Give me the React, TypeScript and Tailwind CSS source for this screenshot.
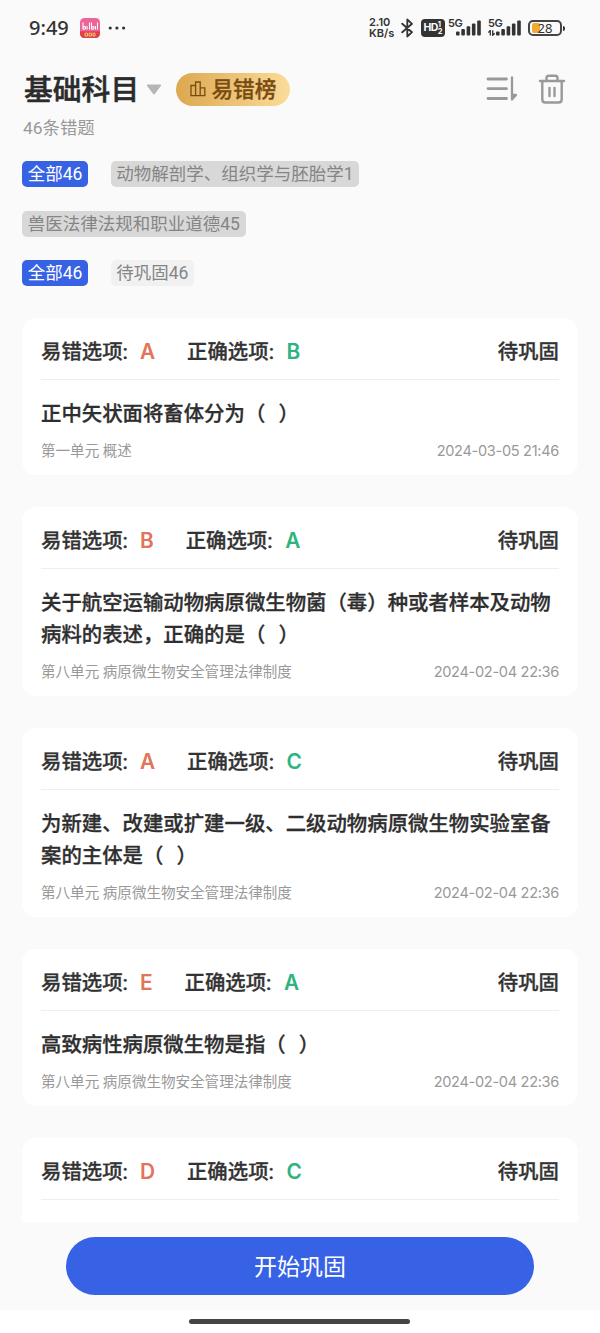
type Question = {
  wrong: string;
  right: string;
  title: string;
  unit: string;
  time: string;
};

const BLANK = "（\u00a0\u00a0）";

const questions: Question[] = [
  { wrong: "A", right: "B", title: "正中矢状面将畜体分为" + BLANK, unit: "第一单元 概述", time: "2024-03-05 21:46" },
  {
    wrong: "B",
    right: "A",
    title: "关于航空运输动物病原微生物菌（毒）种或者样本及动物病料的表述，正确的是" + BLANK,
    unit: "第八单元 病原微生物安全管理法律制度",
    time: "2024-02-04 22:36",
  },
  {
    wrong: "A",
    right: "C",
    title: "为新建、改建或扩建一级、二级动物病原微生物实验室备案的主体是" + BLANK,
    unit: "第八单元 病原微生物安全管理法律制度",
    time: "2024-02-04 22:36",
  },
  { wrong: "E", right: "A", title: "高致病性病原微生物是指" + BLANK, unit: "第八单元 病原微生物安全管理法律制度", time: "2024-02-04 22:36" },
  { wrong: "D", right: "C", title: "", unit: "", time: "" },
];

function Signal() {
  return (
    <svg width="25" height="16" viewBox="0 0 25 16" fill="#333">
      <rect x="0" y="11.5" width="3.6" height="4" rx="1" />
      <rect x="5.3" y="9" width="3.6" height="6.5" rx="1" />
      <rect x="10.6" y="6.2" width="3.6" height="9.3" rx="1" />
      <rect x="15.9" y="3.4" width="3.6" height="12.1" rx="1" />
      <rect x="21.2" y="0.5" width="3.6" height="15" rx="1" />
    </svg>
  );
}

function StatusBar() {
  return (
    <div className="flex h-14 items-center pl-[29px] pr-[35px] text-[#333]">
      <span className="w-[41px] whitespace-nowrap font-['Noto_Sans',sans-serif] text-[20px] font-medium leading-none">
        9:49
      </span>
      <svg className="ml-[10px]" width="20" height="20" viewBox="0 0 20 20">
        <defs>
          <clipPath id="appIcon">
            <rect width="20" height="20" rx="4.5" />
          </clipPath>
        </defs>
        <g clipPath="url(#appIcon)">
          <rect width="20" height="20" fill="#ec6498" />
          <rect y="13.3" width="20" height="7" fill="#df4146" />
          <path
            d="M3 4.5v7M3 9.5q2-2 2.500 0t-2.500 1.500M7 8v3.500M9.500 4.500v7M11.500 4.500v7M11.500 9.500q2-2 2.500 0t-2.500 1.500M15.500 8v3.500M17.500 4.500v7"
            stroke="#fff"
            strokeWidth="1.100"
            fill="none"
          />
          <path d="M5 15.200h2.500v2.800H5zM9 15.200h2.500v2.800H9zM13 15.200h2v2.800h-2z" fill="none" stroke="#f5c07a" strokeWidth="1" />
        </g>
      </svg>
      <svg className="ml-[8px]" width="18" height="4" viewBox="0 0 18 4" fill="#333">
        <circle cx="2.200" cy="2" r="1.600" />
        <circle cx="8.900" cy="2" r="1.600" />
        <circle cx="15.600" cy="2" r="1.600" />
      </svg>

      <div className="ml-auto flex items-center">
        <div className="w-[27px] whitespace-nowrap font-['Inter',sans-serif] text-[11px] font-semibold">
          <div className="h-[11px] leading-[11px]">2.10</div>
          <div className="h-[11px] leading-[11px]">KB/s</div>
        </div>
        <svg className="ml-[5px]" width="13" height="20" viewBox="0 0 13 20" fill="none" stroke="#333" strokeWidth="1.800" strokeLinejoin="round" strokeLinecap="round">
          <path d="M1.200 5.700 11 14.200 6.300 18.500V1.500L11 5.800 1.200 14.300" />
        </svg>
        <div className="ml-[7px] flex h-[18px] w-[24px] items-center justify-center rounded-[4px] bg-[#333] font-['Inter',sans-serif] text-white">
          <span className="text-[10.500px] font-bold leading-none tracking-[-0.500px]">HD</span>
          <span className="flex flex-col text-[7.500px] font-bold leading-[7.500px]">
            <span>1</span>
            <span>2</span>
          </span>
        </div>
        <div className="relative ml-[11px] flex">
          <span className="absolute -left-[8px] -top-[2px] font-['Inter',sans-serif] text-[11px] font-semibold leading-[10px] tracking-[-0.300px]">5G</span>
          <Signal />
        </div>
        <div className="relative ml-[15px] flex">
          <span className="absolute -left-[8px] -top-[2px] font-['Inter',sans-serif] text-[11px] font-semibold leading-[10px] tracking-[-0.300px]">5G</span>
          <svg className="absolute -left-[8px] top-[10px]" width="7" height="6" viewBox="0 0 7 6" stroke="#333" strokeWidth="1.300" fill="none">
            <path d="M.3 2.500 2.300.5v5M4.700.3v5l2-2" />
          </svg>
          <Signal />
        </div>
        <div className="ml-[7px] flex items-center">
          <div className="relative flex h-[16px] w-[34px] items-center justify-center rounded-[5px] border-2 border-[#444]">
            <span className="absolute left-[2px] top-px h-[10px] w-[8px] rounded-[2px] bg-[#f0aa37]" />
            <span className="relative font-['Noto_Sans',sans-serif] text-[13px] leading-none">28</span>
          </div>
          <div className="ml-px h-[5px] w-[2px] rounded-r bg-[#333]" />
        </div>
      </div>
    </div>
  );
}

function Header() {
  return (
    <div className="pl-[24px] pr-[34px]">
      <div className="flex h-[66px] items-center">
        <h1 className="whitespace-nowrap pt-[2px] text-[28.800px] font-medium leading-none text-[#2b2b2b] [-webkit-text-stroke:0.5px]">基础科目</h1>
        <svg className="ml-[7.200px]" width="16" height="11" viewBox="0 0 16 11">
          <path d="M1.500.500h13q1 .3.500 1.200L9 9.800q-1 1.200-2 0L1 1.700Q.5.800 1.500.500z" fill="#b5b5b5" />
        </svg>
        <div className="ml-[14px] flex h-[33px] w-[114px] items-center rounded-full bg-gradient-to-r from-[#dca84f] to-[#fbdc9a] pl-[14px] text-[#794b10]">
          <svg width="16" height="16" viewBox="0 0 16 16" fill="none" stroke="currentColor" strokeWidth="1.300">
            <path d="M1 14.700V4.500h4.600M5.600 14.700V1h4.600v13.700M10.200 6.900h4.600v7.800M.3 14.700h15.200" />
          </svg>
          <span className="ml-[5px] whitespace-nowrap pt-[2px] text-[21.700px] font-medium leading-none [-webkit-text-stroke:0.3px]">易错榜</span>
        </div>
        <svg className="ml-auto" width="32" height="26" viewBox="0 0 32 26" fill="none" stroke="#999" strokeWidth="2.800" strokeLinecap="round" strokeLinejoin="round">
          <path d="M2 3h18.500M2 12.600h18.500M2 22.500h18.500" />
          <path d="M26 1.500v22l4-4.500h-3" strokeWidth="2.300" />
        </svg>
        <svg className="ml-[20px]" width="28" height="30" viewBox="0 0 28 30" fill="none" stroke="#999" strokeWidth="2.400" strokeLinecap="round" strokeLinejoin="round">
          <path d="M2 7h24M4.300 7v18.500q0 3 3 3h13.400q3 0 3-3V7M8.500 6.500V4q0-2.300 2.300-2.300h6.400q2.300 0 2.300 2.300v2.500M11.500 14v8M16.500 14v8" />
        </svg>
      </div>
      <div className="-ml-px h-[12px] text-[17.400px] leading-[12px] text-[#999]">46条错题</div>
    </div>
  );
}

function Chip({ text, kind }: { text: string; kind: "active" | "dark" | "light" }) {
  const look = kind === "active" ? "bg-[#3762e4] text-white" : kind === "dark" ? "bg-[#d8d8d8] text-[#858585]" : "bg-[#f1f1f1] text-[#858585]";
  return <div className={"flex h-[26px] items-center whitespace-nowrap rounded-[5px] px-[5.700px] pt-[2px] text-[17.500px] leading-none " + look}>{text}</div>;
}

function Card({ q }: { q: Question }) {
  return (
    <section className="shrink-0 rounded-[14px] bg-white px-[19px] pb-[15px]">
      <div className="flex h-[62px] items-center border-b border-[#efefef] pt-[7px] text-[20.400px] font-medium text-[#333] [-webkit-text-stroke:0.3px]">
        <span>易错选项:</span>
        <span className="ml-[12px] font-['Inter',sans-serif] text-[20.800px]/[30px] font-semibold text-[#e17459] [-webkit-text-stroke:0]">{q.wrong}</span>
        <span className="ml-[32px]">正确选项:</span>
        <span className="ml-[12.500px] font-['Inter',sans-serif] text-[20.800px]/[30px] font-semibold text-[#2fb47f] [-webkit-text-stroke:0]">{q.right}</span>
        <span className="ml-auto">待巩固</span>
      </div>
      <p className="relative top-px mt-[17px] min-h-[32px] whitespace-pre-wrap break-all text-[20.400px] font-medium leading-[32px] text-[#2e2e2e] [word-spacing:1.500px] [-webkit-text-stroke:0.3px]">
        {q.title}
      </p>
      <div className="mt-[13px] flex h-[18px] items-center justify-between whitespace-nowrap text-[14.550px] leading-[18px] text-[#999]">
        <span className="pt-px">{q.unit}</span>
        <span className="font-['Inter',sans-serif] tracking-[-0.300px]">{q.time}</span>
      </div>
    </section>
  );
}

export default function App() {
  return (
    <div className="flex h-[1333px] w-[600px] flex-col overflow-hidden bg-[#fafafa] font-['Roboto','Noto_Sans_CJK_SC',sans-serif]">
      <StatusBar />
      <Header />
      <div className="ml-[22px] mt-[27px] flex flex-wrap gap-x-[22.500px] gap-y-[23.500px]">
        <Chip text="全部46" kind="active" />
        <Chip text="动物解剖学、组织学与胚胎学1" kind="dark" />
        <Chip text="兽医法律法规和职业道德45" kind="dark" />
      </div>
      <div className="ml-[22px] mt-[23.500px] flex gap-[22.500px]">
        <Chip text="全部46" kind="active" />
        <Chip text="待巩固46" kind="light" />
      </div>
      <main className="mx-[22px] mt-[32px] flex h-[904px] shrink-0 flex-col gap-[32px] overflow-hidden">
        {questions.map((q, i) => (
          <Card key={i} q={q} />
        ))}
      </main>
      <button className="mx-[66px] mt-[15px] h-[58px] shrink-0 rounded-full bg-[#3762e6] pt-[2px] text-[23px] leading-none text-white">开始巩固</button>
      <div className="mt-[15px] flex flex-1 items-center justify-center bg-white pr-px">
        <div className="h-[5px] w-[221px] rounded-full bg-[#444]" />
      </div>
    </div>
  );
}
